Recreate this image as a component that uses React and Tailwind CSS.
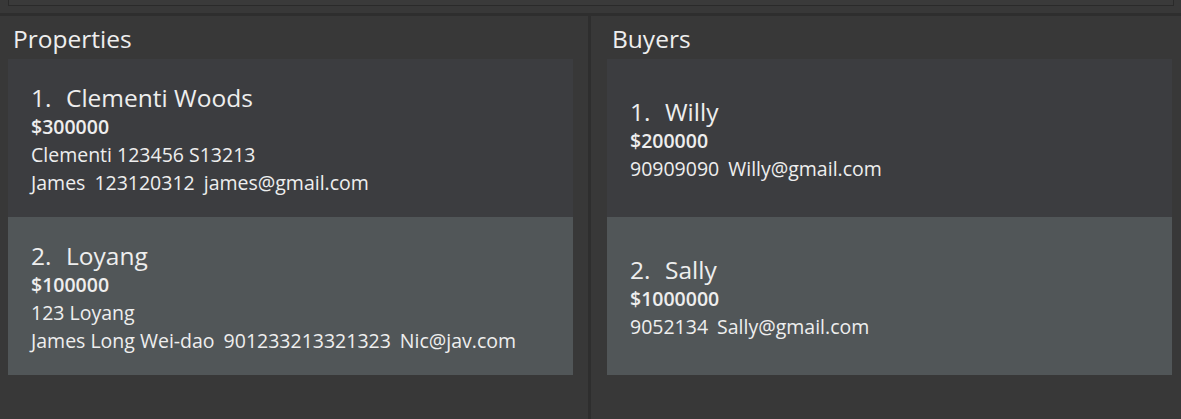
import React from "react";

const properties = [
  {
    id: 1,
    name: "Clementi Woods",
    price: "$300000",
    address: "Clementi 123456 S13213",
    owner: ["James", "123120312", "james@gmail.com"],
  },
  {
    id: 2,
    name: "Loyang",
    price: "$100000",
    address: "123 Loyang",
    owner: ["James Long Wei-dao", "901233213321323", "Nic@jav.com"],
  },
];

const buyers = [
  { id: 1, name: "Willy", budget: "$200000", contact: ["90909090", "Willy@gmail.com"] },
  { id: 2, name: "Sally", budget: "$1000000", contact: ["9052134", "Sally@gmail.com"] },
];

function Card({ index, title, money, lines }) {
  // alternating rows: odd darker, even lighter slate
  const bg = index % 2 === 1 ? "bg-[#3c3d40]" : "bg-[#515658]";
  return (
    <div className={`${bg} h-[158px] flex flex-col justify-center pl-[23px] pt-[4px] text-[#eeeeee]`}>
      <div className="flex text-[24.5px] font-medium leading-[30px]">
        <span className="w-[35px]">{index}.</span>
        <span>{title}</span>
      </div>
      <div className="text-[19.5px] font-semibold leading-[28px]">{money}</div>
      {lines.map((line, i) => (
        <div key={i} className="flex gap-[9px] text-[19.5px] leading-[28px]">
          {line.map((part, j) => (
            <span key={j}>{part}</span>
          ))}
        </div>
      ))}
    </div>
  );
}

export default function App() {
  return (
    <div className="w-[1181px] h-[419px] bg-[#383838] flex flex-col overflow-hidden font-['Open_Sans',sans-serif]">
      {/* top box cut off by window edge */}
      <div className="h-[13px] pl-[8px] pr-[7px]">
        <div className="h-[6px] border-x border-b border-[#2a2a2a] bg-[#3a3a3a]" />
      </div>
      <div className="h-[3px] bg-[#2e2e2e]" />

      <div className="flex flex-1">
        {/* PROPERTIES */}
        <div className="w-[588px]">
          <h2 className="pl-[13px] pt-[7px] h-[43px] text-[24.5px] font-medium leading-[32px] text-[#eeeeee]">Properties</h2>
          <div className="pl-[8px] w-[573px]">
            {properties.map((p) => (
              <Card
                key={p.id}
                index={p.id}
                title={p.name}
                money={p.price}
                lines={[[p.address], p.owner]}
              />
            ))}
          </div>
        </div>

        <div className="w-[3px] bg-[#2e2e2e]" />

        {/* BUYERS */}
        <div className="flex-1">
          <h2 className="pl-[21px] pt-[7px] h-[43px] text-[24.5px] font-medium leading-[32px] text-[#eeeeee]">Buyers</h2>
          <div className="pl-[16px] w-[581px]">
            {buyers.map((b) => (
              <Card key={b.id} index={b.id} title={b.name} money={b.budget} lines={[b.contact]} />
            ))}
          </div>
        </div>
      </div>
    </div>
  );
}
